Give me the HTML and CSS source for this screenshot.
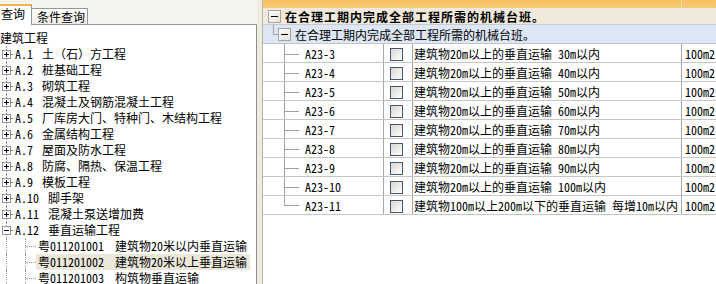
FILE: index.html
```html
<!DOCTYPE html>
<html lang="zh-CN">
<head>
<meta charset="utf-8">
<title>查询</title>
<link rel="stylesheet" href="styles.css">
</head>
<body>
<div class="app">
  <div class="left">
    <div class="tabs">
      <div class="tab-on">查询</div>
      <div class="tab-off">条件查询</div>
      <div class="tab-fill"></div>
    </div>
    <div class="tree">
      <div class="node root">建筑工程</div>
      <div class="node"><span class="gut"><span class="seg seg-top"></span><span class="tbox plus"></span><span class="seg seg-bot"></span></span><span class="hd"></span><span class="code c3">A.1</span><span>土（石）方工程</span></div>
      <div class="node"><span class="gut"><span class="seg seg-top"></span><span class="tbox plus"></span><span class="seg seg-bot"></span></span><span class="hd"></span><span class="code c3">A.2</span><span>桩基础工程</span></div>
      <div class="node"><span class="gut"><span class="seg seg-top"></span><span class="tbox plus"></span><span class="seg seg-bot"></span></span><span class="hd"></span><span class="code c3">A.3</span><span>砌筑工程</span></div>
      <div class="node"><span class="gut"><span class="seg seg-top"></span><span class="tbox plus"></span><span class="seg seg-bot"></span></span><span class="hd"></span><span class="code c3">A.4</span><span>混凝土及钢筋混凝土工程</span></div>
      <div class="node"><span class="gut"><span class="seg seg-top"></span><span class="tbox plus"></span><span class="seg seg-bot"></span></span><span class="hd"></span><span class="code c3">A.5</span><span>厂库房大门、特种门、木结构工程</span></div>
      <div class="node"><span class="gut"><span class="seg seg-top"></span><span class="tbox plus"></span><span class="seg seg-bot"></span></span><span class="hd"></span><span class="code c3">A.6</span><span>金属结构工程</span></div>
      <div class="node"><span class="gut"><span class="seg seg-top"></span><span class="tbox plus"></span><span class="seg seg-bot"></span></span><span class="hd"></span><span class="code c3">A.7</span><span>屋面及防水工程</span></div>
      <div class="node"><span class="gut"><span class="seg seg-top"></span><span class="tbox plus"></span><span class="seg seg-bot"></span></span><span class="hd"></span><span class="code c3">A.8</span><span>防腐、隔热、保温工程</span></div>
      <div class="node"><span class="gut"><span class="seg seg-top"></span><span class="tbox plus"></span><span class="seg seg-bot"></span></span><span class="hd"></span><span class="code c3">A.9</span><span>模板工程</span></div>
      <div class="node"><span class="gut"><span class="seg seg-top"></span><span class="tbox plus"></span><span class="seg seg-bot"></span></span><span class="hd"></span><span class="code c4">A.10</span><span>脚手架</span></div>
      <div class="node"><span class="gut"><span class="seg seg-top"></span><span class="tbox plus"></span><span class="seg seg-bot"></span></span><span class="hd"></span><span class="code c4">A.11</span><span>混凝土泵送增加费</span></div>
      <div class="node"><span class="gut"><span class="seg seg-top"></span><span class="tbox minus"></span><span class="seg seg-bot"></span></span><span class="hd"></span><span class="code c4">A.12</span><span>垂直运输工程</span></div>
      <div class="node"><span class="vl"></span><span class="elbow"></span><span class="label"><span class="ccode">粤011201001</span><span>建筑物20米以内垂直运输</span></span></div>
      <div class="node"><span class="vl"></span><span class="elbow"></span><span class="label sel"><span class="ccode">粤011201002</span><span>建筑物20米以上垂直运输</span></span></div>
      <div class="node"><span class="vl"></span><span class="elbow"></span><span class="label"><span class="ccode">粤011201003</span><span>构筑物垂直运输</span></span></div>
    </div>
  </div>
  <div class="split"></div>
  <div class="right">
    <div class="colhead"><div class="ch1"></div><div class="ch2"></div></div>
    <div class="grp1"><span class="xbox"></span><span class="gtext">在合理工期内完成全部工程所需的机械台班。</span></div>
    <div class="grp2"><span class="gel"></span><span class="xbox xbox2"></span><span class="gtext2">在合理工期内完成全部工程所需的机械台班。</span></div>
    <div class="row"><div class="c-code"><span class="guide"></span>A23-3</div><div class="c-chk"><span class="chk"></span></div><div class="c-desc">建筑物20m以上的垂直运输 30m以内</div><div class="c-unit">100m2</div></div>
    <div class="row"><div class="c-code"><span class="guide"></span>A23-4</div><div class="c-chk"><span class="chk"></span></div><div class="c-desc">建筑物20m以上的垂直运输 40m以内</div><div class="c-unit">100m2</div></div>
    <div class="row"><div class="c-code"><span class="guide"></span>A23-5</div><div class="c-chk"><span class="chk"></span></div><div class="c-desc">建筑物20m以上的垂直运输 50m以内</div><div class="c-unit">100m2</div></div>
    <div class="row"><div class="c-code"><span class="guide"></span>A23-6</div><div class="c-chk"><span class="chk"></span></div><div class="c-desc">建筑物20m以上的垂直运输 60m以内</div><div class="c-unit">100m2</div></div>
    <div class="row"><div class="c-code"><span class="guide"></span>A23-7</div><div class="c-chk"><span class="chk"></span></div><div class="c-desc">建筑物20m以上的垂直运输 70m以内</div><div class="c-unit">100m2</div></div>
    <div class="row"><div class="c-code"><span class="guide"></span>A23-8</div><div class="c-chk"><span class="chk"></span></div><div class="c-desc">建筑物20m以上的垂直运输 80m以内</div><div class="c-unit">100m2</div></div>
    <div class="row"><div class="c-code"><span class="guide"></span>A23-9</div><div class="c-chk"><span class="chk"></span></div><div class="c-desc">建筑物20m以上的垂直运输 90m以内</div><div class="c-unit">100m2</div></div>
    <div class="row"><div class="c-code"><span class="guide"></span>A23-10</div><div class="c-chk"><span class="chk"></span></div><div class="c-desc">建筑物20m以上的垂直运输 100m以内</div><div class="c-unit">100m2</div></div>
    <div class="row last"><div class="c-code"><span class="guide"></span>A23-11</div><div class="c-chk"><span class="chk"></span></div><div class="c-desc">建筑物100m以上200m以下的垂直运输 每增10m以内</div><div class="c-unit">100m2</div></div>
  </div>
</div>
</body>
</html>
```

FILE: styles.css
```css
* { box-sizing: border-box; }
html, body { margin: 0; padding: 0; }
body {
  width: 716px;
  height: 284px;
  overflow: hidden;
  background: #ece9d8;
  font-family: "Noto Sans Mono CJK SC", "Noto Sans CJK SC", sans-serif;
  font-size: 12px;
  color: #000;
}
.app { display: flex; height: 284px; }

/* left panel */
.left {
  width: 257px;
  flex: none;
  display: flex;
  flex-direction: column;
  background: #f5f4ef;
}
.tabs { height: 25px; flex: none; display: flex; align-items: flex-end; }
.tab-on {
  width: 32px;
  height: 21px;
  flex: none;
  background: #fff;
  border-top: 2px solid #f4b64a;
  border-right: 1px solid #919b9c;
  padding: 1px 0 0 1px;
  line-height: 14px;
}
.tab-off {
  width: 56px;
  height: 17px;
  flex: none;
  background: linear-gradient(#ffffff, #efeee8);
  border-top: 1px solid #919b9c;
  border-right: 1px solid #919b9c;
  border-bottom: 1px solid #919b9c;
  padding-left: 5px;
  line-height: 15px;
}
.tab-fill { flex: 1; height: 1px; background: #919b9c; }
.tree {
  flex: 1;
  background: #fff;
  border-right: 1px solid #8f8f8f;
  padding-top: 5px;
  overflow: hidden;
}
.node {
  height: 16px;
  display: flex;
  align-items: center;
  white-space: nowrap;
  line-height: 16px;
}
.gut {
  width: 9px;
  margin-left: 2px;
  align-self: stretch;
  flex: none;
  display: flex;
  flex-direction: column;
  align-items: center;
}
.seg { width: 1px; border-left: 1px dotted #9a9a9a; }
.seg-top { height: 4px; }
.seg-bot { flex: 1; }
.tbox {
  width: 9px;
  height: 9px;
  flex: none;
  border: 1px solid #8d989b;
}
.plus {
  background:
    linear-gradient(#000, #000) 1px 3px / 5px 1px no-repeat,
    linear-gradient(#000, #000) 3px 1px / 1px 5px no-repeat,
    #fff;
}
.minus {
  background:
    linear-gradient(#000, #000) 1px 3px / 5px 1px no-repeat,
    #fff;
}
.hd {
  width: 4px;
  height: 1px;
  flex: none;
  align-self: flex-start;
  margin-top: 8px;
  border-top: 1px dotted #9a9a9a;
}
.code { flex: none; display: inline-block; }
.c3 { width: 27px; }
.c4 { width: 33px; }
.vl {
  width: 19px;
  margin-left: 6px;
  flex: none;
  align-self: stretch;
  border-left: 1px dotted #9a9a9a;
}
.elbow {
  width: 11px;
  flex: none;
  align-self: stretch;
  border-left: 1px dotted #9a9a9a;
  display: flex;
  flex-direction: column;
}
.elbow::before {
  content: "";
  height: 8px;
  border-bottom: 1px dotted #9a9a9a;
}
.label {
  display: flex;
  height: 16px;
  padding: 0 3px 0 2px;
}
.label.sel { background: #ebe8da; }
.ccode { width: 77px; flex: none; }

/* splitter */
.split {
  width: 6px;
  flex: none;
  background: #eeebe0;
  border-right: 1px solid #b8b4a6;
}

/* right panel */
.right {
  flex: 1;
  min-width: 0;
  background: #fff;
  display: flex;
  flex-direction: column;
  overflow: hidden;
}
.colhead { height: 8px; flex: none; display: flex; }
.ch1 {
  width: 419px;
  flex: none;
  background: linear-gradient(#f6c062, #f7c978);
  border-right: 1px solid #f9dca6;
}
.ch2 { flex: 1; background: linear-gradient(#f6c062, #f7c978); }
.grp1 {
  height: 17px;
  flex: none;
  background: #f1eada;
  border-bottom: 1px solid #c6ccd6;
  display: flex;
  align-items: center;
  padding-left: 5px;
  white-space: nowrap;
}
.xbox {
  width: 13px;
  height: 13px;
  flex: none;
  border: 1px solid #a3a3a3;
  background:
    linear-gradient(#000, #000) 2px 5px / 7px 1px no-repeat,
    linear-gradient(135deg, #ffffff, #e4e1d8);
}
.gtext { margin-left: 4px; font-weight: bold; letter-spacing: 1px; }
.grp2 {
  height: 19px;
  flex: none;
  background: #dde6f4;
  border-bottom: 1px solid #c4c4c4;
  display: flex;
  align-items: flex-start;
  padding-left: 10px;
  white-space: nowrap;
}
.gel {
  width: 5px;
  height: 10px;
  flex: none;
  border-left: 1px solid #a0a0a0;
  border-bottom: 1px solid #a0a0a0;
}
.xbox2 { margin-top: 3px; }
.gtext2 { margin-left: 4px; align-self: center; }
.row {
  height: 19px;
  flex: none;
  display: flex;
  border-bottom: 1px solid #c6c6c6;
  white-space: nowrap;
}
.c-code {
  width: 121px;
  flex: none;
  border-right: 1px solid #a8a8a8;
  display: flex;
  align-items: center;
}
.guide {
  align-self: stretch;
  width: 15px;
  flex: none;
  margin-left: 21px;
  margin-right: 6px;
  border-left: 1px solid #a0a0a0;
  display: flex;
  flex-direction: column;
}
.guide::before {
  content: "";
  height: 10px;
  border-bottom: 1px solid #a0a0a0;
}
.row.last .guide { align-self: flex-start; height: 10px; }
.c-chk {
  width: 29px;
  flex: none;
  border-right: 1px solid #a8a8a8;
  display: flex;
  align-items: center;
  padding-left: 6px;
}
.chk {
  width: 13px;
  height: 13px;
  margin-top: 3px;
  border: 1px solid #46566c;
  background: linear-gradient(135deg, #d8d6ce, #ffffff);
}
.c-desc {
  width: 269px;
  flex: none;
  border-right: 1px solid #a8a8a8;
  padding-left: 1px;
  display: flex;
  align-items: center;
  overflow: hidden;
}
.c-unit {
  flex: 1;
  padding-left: 3px;
  display: flex;
  align-items: center;
}
```
